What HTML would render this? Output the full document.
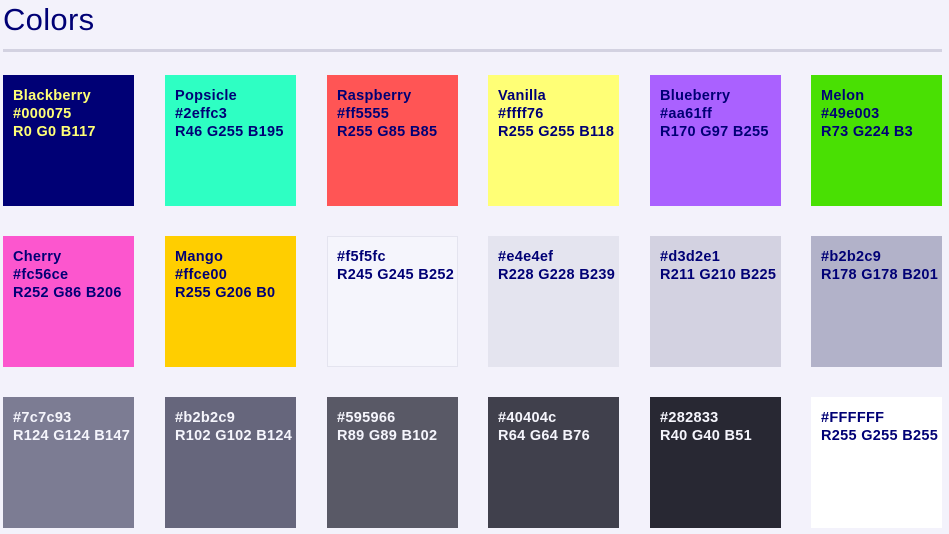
<!DOCTYPE html>
<html><head><style>
html,body{margin:0;padding:0;background:#f3f2fb;width:949px;height:534px;overflow:hidden;font-family:"Liberation Sans",sans-serif;}
h1{position:absolute;left:3px;top:2px;margin:0;font-size:31px;font-weight:normal;color:#000075;letter-spacing:0.3px}
.hr{position:absolute;left:3px;top:49px;width:939px;height:3px;background:#d3d2e1}
.s{position:absolute;width:131px;height:131px;box-sizing:border-box;padding:12px 0 0 10px;font-weight:bold;font-size:14.5px;line-height:18px;letter-spacing:0.3px;color:#000075}
</style></head><body>
<h1>Colors</h1><div class="hr"></div>
<div class="s" style="left:3px;top:75px;background:#000075;color:#ffff76">Blackberry<br>#000075<br>R0 G0 B117</div>
<div class="s" style="left:165px;top:75px;background:#2effc3">Popsicle<br>#2effc3<br>R46 G255 B195</div>
<div class="s" style="left:327px;top:75px;background:#ff5555">Raspberry<br>#ff5555<br>R255 G85 B85</div>
<div class="s" style="left:488px;top:75px;background:#ffff76">Vanilla<br>#ffff76<br>R255 G255 B118</div>
<div class="s" style="left:650px;top:75px;background:#aa61ff">Blueberry<br>#aa61ff<br>R170 G97 B255</div>
<div class="s" style="left:811px;top:75px;background:#49e003">Melon<br>#49e003<br>R73 G224 B3</div>
<div class="s" style="left:3px;top:236px;background:#fc56ce">Cherry<br>#fc56ce<br>R252 G86 B206</div>
<div class="s" style="left:165px;top:236px;background:#ffce00">Mango<br>#ffce00<br>R255 G206 B0</div>
<div class="s" style="left:327px;top:236px;background:#f5f5fc;border:1px solid #e4e4ef;padding:11px 0 0 9px">#f5f5fc<br>R245 G245 B252</div>
<div class="s" style="left:488px;top:236px;background:#e4e4ef">#e4e4ef<br>R228 G228 B239</div>
<div class="s" style="left:650px;top:236px;background:#d3d2e1">#d3d2e1<br>R211 G210 B225</div>
<div class="s" style="left:811px;top:236px;background:#b2b2c9">#b2b2c9<br>R178 G178 B201</div>
<div class="s" style="left:3px;top:397px;background:#7c7c93;color:#f5f5fc">#7c7c93<br>R124 G124 B147</div>
<div class="s" style="left:165px;top:397px;background:#66667c;color:#f5f5fc">#b2b2c9<br>R102 G102 B124</div>
<div class="s" style="left:327px;top:397px;background:#595966;color:#f5f5fc">#595966<br>R89 G89 B102</div>
<div class="s" style="left:488px;top:397px;background:#40404c;color:#f5f5fc">#40404c<br>R64 G64 B76</div>
<div class="s" style="left:650px;top:397px;background:#282833;color:#f5f5fc">#282833<br>R40 G40 B51</div>
<div class="s" style="left:811px;top:397px;background:#ffffff">#FFFFFF<br>R255 G255 B255</div>
</body></html>
